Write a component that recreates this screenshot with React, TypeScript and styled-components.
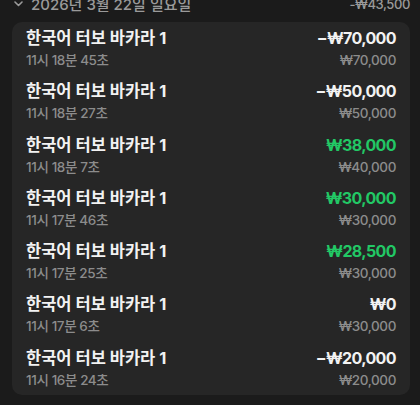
import React from 'react';
import styled, { createGlobalStyle } from 'styled-components';

const GlobalStyle = createGlobalStyle`
  html, body {
    margin: 0;
    padding: 0;
    background: #1b1b1b;
  }
  body {
    font-family: Inter, "Noto Sans CJK KR", sans-serif;
  }
`;

const Page = styled.div`
  width: 420px;
  height: 405px;
  overflow: hidden;
  background: #1b1b1b;
`;

const Group = styled.div`
  margin-top: -7px;
  padding: 0 10px 0 12px;
  display: flex;
  flex-direction: column;
  gap: 8px;
`;

const DayHeader = styled.div`
  display: flex;
  align-items: center;
  justify-content: space-between;
  height: 21px;
  padding-left: 2px;
  color: #9a9a9a;
  font-size: 15px;
  font-weight: 500;
`;

const DayLabel = styled.div`
  display: flex;
  align-items: center;
  gap: 8px;
`;

const DayTotal = styled.span`
  font-size: 13px;
  letter-spacing: -0.4px;
`;

const Card = styled.div`
  background: #262626;
  border-radius: 10px;
  display: flex;
  flex-direction: column;
`;

const Row = styled.div`
  display: flex;
  justify-content: space-between;
  align-items: center;
  padding: 4px 14px 4.3px 14px;
`;

const Col = styled.div<{ $right?: boolean }>`
  display: flex;
  flex-direction: column;
  align-items: ${(p) => (p.$right ? 'flex-end' : 'flex-start')};
`;

const Title = styled.div`
  color: #f2f2f2;
  font-size: 16.5px;
  font-weight: 700;
  line-height: 24px;
`;

const Sub = styled.div`
  color: #8c8c8c;
  font-size: 13.5px;
  font-weight: 500;
  line-height: 21px;
  letter-spacing: -0.4px;
`;

const Amount = styled.div<{ $win?: boolean }>`
  color: ${(p) => (p.$win ? '#22c865' : '#f2f2f2')};
  font-size: 16px;
  font-weight: 700;
  line-height: 24px;
  letter-spacing: -0.6px;
`;

const Chevron = () => (
  <svg width="9" height="6" viewBox="0 0 9 6" fill="none">
    <path d="M1 1l3.5 3.5L8 1" stroke="#9a9a9a" strokeWidth="1.6" strokeLinecap="round" strokeLinejoin="round" />
  </svg>
);

const rows = [
  { time: '11시 18분 45초', result: '−₩70,000', bet: '₩70,000', win: false },
  { time: '11시 18분 27초', result: '−₩50,000', bet: '₩50,000', win: false },
  { time: '11시 18분 7초', result: '₩38,000', bet: '₩40,000', win: true },
  { time: '11시 17분 46초', result: '₩30,000', bet: '₩30,000', win: true },
  { time: '11시 17분 25초', result: '₩28,500', bet: '₩30,000', win: true },
  { time: '11시 17분 6초', result: '₩0', bet: '₩30,000', win: false },
  { time: '11시 16분 24초', result: '−₩20,000', bet: '₩20,000', win: false },
];

export default function App() {
  return (
    <Page>
      <GlobalStyle />
      <Group>
        <DayHeader>
          <DayLabel>
            <Chevron />
            <span>2026년 3월 22일 일요일</span>
          </DayLabel>
          <DayTotal>-₩43,500</DayTotal>
        </DayHeader>
        <Card>
          {rows.map((r, i) => (
            <Row key={i}>
              <Col>
                <Title>한국어 터보 바카라 1</Title>
                <Sub>{r.time}</Sub>
              </Col>
              <Col $right>
                <Amount $win={r.win}>{r.result}</Amount>
                <Sub>{r.bet}</Sub>
              </Col>
            </Row>
          ))}
        </Card>
      </Group>
    </Page>
  );
}
